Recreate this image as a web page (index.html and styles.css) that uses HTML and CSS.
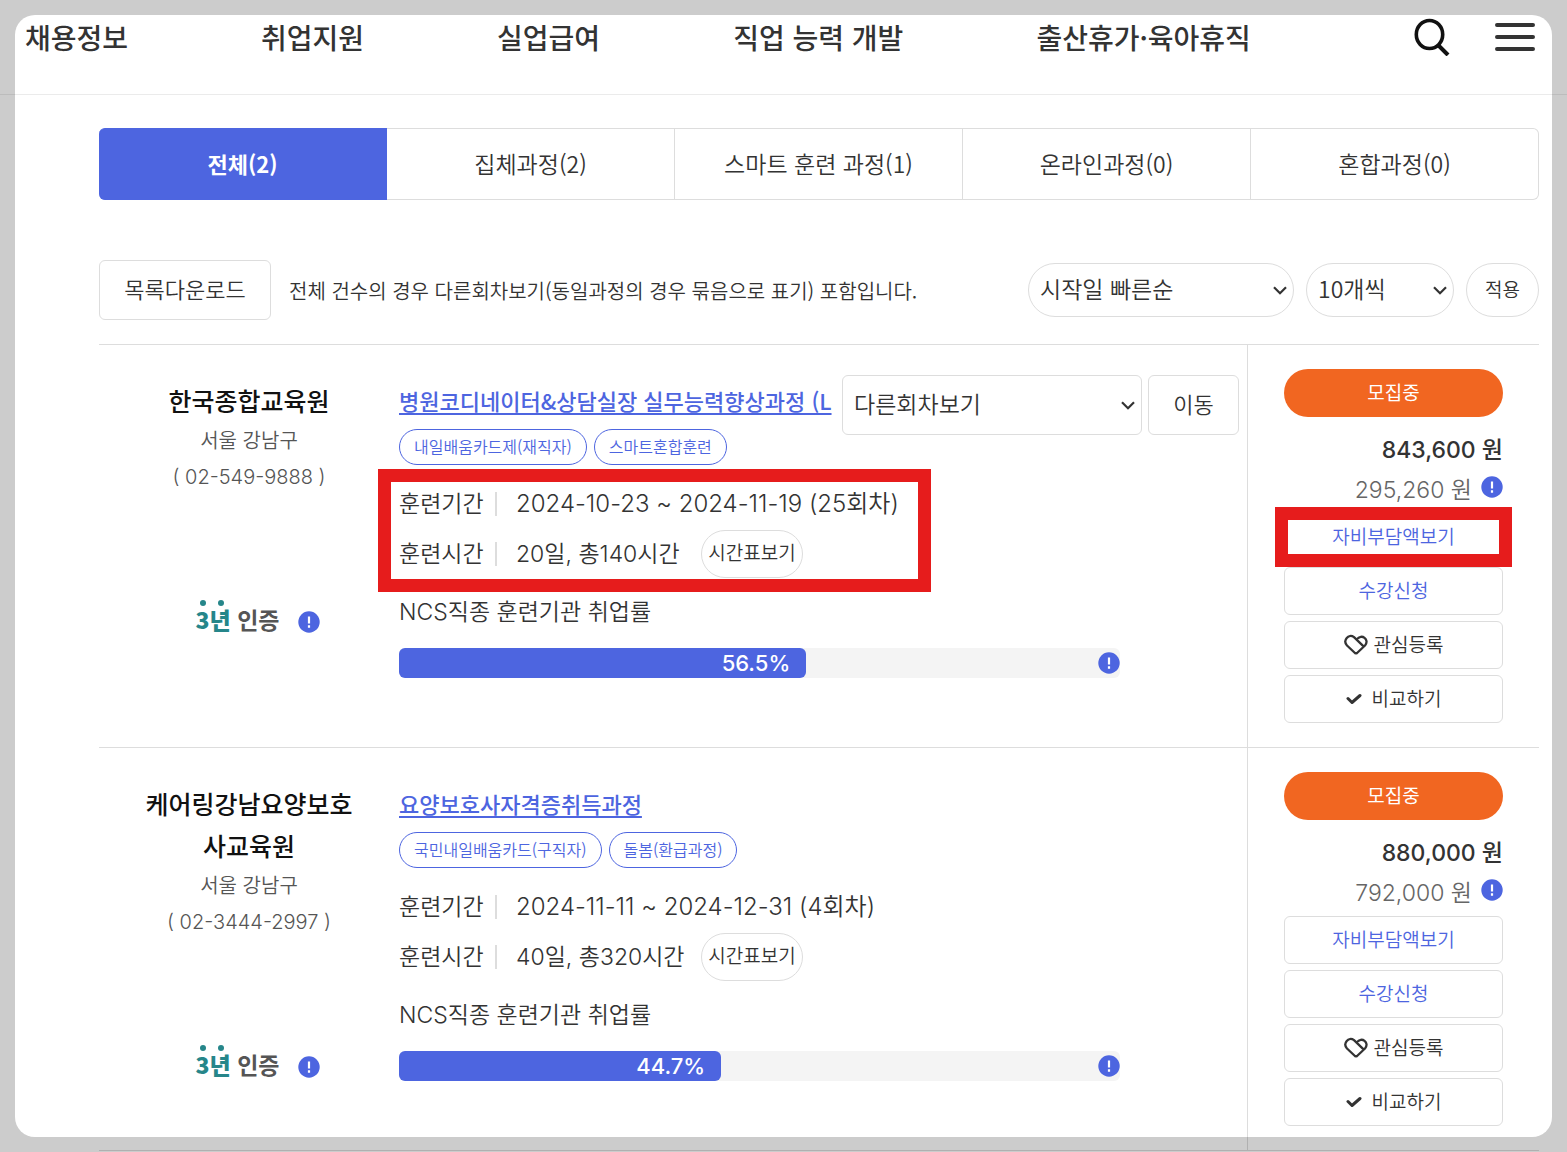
FILE: index.html
```html
<!DOCTYPE html>
<html lang="ko">
    <head>
        <meta charset="utf-8">
        <title>훈련과정 검색</title>
        <meta name="viewport" content="width=device-width, initial-scale=1">
        <link rel="stylesheet" href="styles.css">
    </head>

    <body>
        <svg class="sprite" aria-hidden="true">
            <symbol id="chevron" viewBox="0 0 14 9"><path d="M1 1.2 7 7.2 13 1.2" fill="none" stroke="currentColor" stroke-width="2.2"/></symbol>
            <symbol id="notice" viewBox="0 0 22 22"><circle cx="11" cy="11" r="10.7" fill="#4d65e0"/><path d="M11 5.5v7M11 14.3v2.4" stroke="#fff" stroke-width="2.2"/></symbol>
            <symbol id="heart" viewBox="0 0 24 22"><path d="M12 20 3 11.5C-1.5 6.5 4.5-1 10 3.2L19.3 12.2M12.8 5.4C17.5-1 26 5.5 21 11.5L12 20" fill="none" stroke="currentColor" stroke-width="2.3" stroke-linejoin="round"/></symbol>
            <symbol id="check" viewBox="0 0 16 12"><path d="M2 5.5 6 9.5 14 2.5" fill="none" stroke="currentColor" stroke-width="3" stroke-linecap="round" stroke-linejoin="round"/></symbol>
        </svg>

        <header class="header">
            <nav class="menu">
                <a href="#">채용정보</a>
                <a href="#">취업지원</a>
                <a href="#">실업급여</a>
                <a href="#">직업 능력 개발</a>
                <a href="#">출산휴가·육아휴직</a>
            </nav>
            <div class="header-tools">
                <button type="button" aria-label="검색">
                    <svg width="36" height="38" viewBox="0 0 36 38"><ellipse cx="15.5" cy="16.5" rx="13.2" ry="14" fill="none" stroke="#111" stroke-width="3.6"/><path d="M24 27 34 37" stroke="#111" stroke-width="4"/></svg>
                </button>
                <button type="button" aria-label="전체메뉴">
                    <svg width="40" height="30" viewBox="0 0 40 30"><path d="M2 3h36M2 15h36M2 27h36" stroke="#333" stroke-width="4" stroke-linecap="round"/></svg>
                </button>
            </div>
        </header>

        <main class="content">
            <div class="tabs">
                <button type="button" class="tab active">전체(2)</button>
                <button type="button" class="tab">집체과정(2)</button>
                <button type="button" class="tab">스마트 훈련 과정(1)</button>
                <button type="button" class="tab">온라인과정(0)</button>
                <button type="button" class="tab">혼합과정(0)</button>
            </div>

            <div class="toolbar">
                <button type="button" class="btn btn-download">목록다운로드</button>
                <p class="toolbar-note">전체 건수의 경우 다른회차보기(동일과정의 경우 묶음으로 표기) 포함입니다.</p>
                <span class="select select-round select-sort">
                    <select aria-label="정렬"><option>시작일 빠른순</option></select>
                    <svg><use href="#chevron"/></svg>
                </span>
                <span class="select select-round select-count">
                    <select aria-label="목록 개수"><option>10개씩</option></select>
                    <svg><use href="#chevron"/></svg>
                </span>
                <button type="button" class="btn btn-apply">적용</button>
            </div>

            <ul class="courses">
                <li class="course">
                    <div class="school">
                        <strong class="school-name">한국종합교육원</strong>
                        <span>서울 강남구</span>
                        <span>( 02-549-9888 )</span>
                        <div class="cert">
                            <span class="cert-mark"><b>3년</b> 인증</span>
                            <svg class="notice"><use href="#notice"/></svg>
                        </div>
                    </div>
                    <div class="info">
                        <div class="info-head">
                            <div class="info-title">
                                <a href="#" class="title">병원코디네이터&amp;상담실장 실무능력향상과정 (L</a>
                                <div class="tags"><span>내일배움카드제(재직자)</span><span>스마트혼합훈련</span></div>
                            </div>
                            <span class="select">
                                <select aria-label="다른회차보기"><option>다른회차보기</option></select>
                                <svg><use href="#chevron"/></svg>
                            </span>
                            <button type="button" class="btn btn-move">이동</button>
                        </div>
                        <dl class="schedule marked">
                            <div><dt>훈련기간</dt><dd>2024-10-23 ~ 2024-11-19 (25회차)</dd></div>
                            <div><dt>훈련시간</dt><dd class="hours">20일, 총140시간</dd><dd><button type="button" class="btn btn-timetable">시간표보기</button></dd></div>
                        </dl>
                        <p class="rate-label">NCS직종 훈련기관 취업률</p>
                        <div class="rate">
                            <div class="rate-bar" style="width: 56.5%">56.5%</div>
                            <svg class="notice"><use href="#notice"/></svg>
                        </div>
                    </div>
                    <div class="side">
                        <span class="status">모집중</span>
                        <p class="prices">
                            <strong>843,600 원</strong>
                            <span>295,260 원 <svg class="notice"><use href="#notice"/></svg></span>
                        </p>
                        <div class="marked"><button type="button" class="btn btn-blue">자비부담액보기</button></div>
                        <button type="button" class="btn btn-blue">수강신청</button>
                        <button type="button" class="btn"><svg class="icon-heart"><use href="#heart"/></svg>관심등록</button>
                        <button type="button" class="btn"><svg class="icon-check"><use href="#check"/></svg>비교하기</button>
                    </div>
                </li>

                <li class="course">
                    <div class="school">
                        <strong class="school-name">케어링강남요양보호사교육원</strong>
                        <span>서울 강남구</span>
                        <span>( 02-3444-2997 )</span>
                        <div class="cert">
                            <span class="cert-mark"><b>3년</b> 인증</span>
                            <svg class="notice"><use href="#notice"/></svg>
                        </div>
                    </div>
                    <div class="info">
                        <div class="info-head">
                            <div class="info-title">
                                <a href="#" class="title">요양보호사자격증취득과정</a>
                                <div class="tags"><span>국민내일배움카드(구직자)</span><span>돌봄(환급과정)</span></div>
                            </div>
                        </div>
                        <dl class="schedule">
                            <div><dt>훈련기간</dt><dd>2024-11-11 ~ 2024-12-31 (4회차)</dd></div>
                            <div><dt>훈련시간</dt><dd class="hours">40일, 총320시간</dd><dd><button type="button" class="btn btn-timetable">시간표보기</button></dd></div>
                        </dl>
                        <p class="rate-label">NCS직종 훈련기관 취업률</p>
                        <div class="rate">
                            <div class="rate-bar" style="width: 44.7%">44.7%</div>
                            <svg class="notice"><use href="#notice"/></svg>
                        </div>
                    </div>
                    <div class="side">
                        <span class="status">모집중</span>
                        <p class="prices">
                            <strong>880,000 원</strong>
                            <span>792,000 원 <svg class="notice"><use href="#notice"/></svg></span>
                        </p>
                        <button type="button" class="btn btn-blue">자비부담액보기</button>
                        <button type="button" class="btn btn-blue">수강신청</button>
                        <button type="button" class="btn"><svg class="icon-heart"><use href="#heart"/></svg>관심등록</button>
                        <button type="button" class="btn"><svg class="icon-check"><use href="#check"/></svg>비교하기</button>
                    </div>
                </li>
            </ul>
        </main>

        <div class="frame"></div>
    </body>
</html>
```
FILE: styles.css
```css
*,
*::before,
*::after {
    box-sizing: border-box;
    margin: 0;
    padding: 0;
}

body {
    background: #fff;
    color: #333;
    font-family: "Noto Sans CJK KR", sans-serif;
    font-size: 23px;
    font-weight: 350;
}

button,
select {
    font: inherit;
    color: inherit;
    background: #fff;
    cursor: pointer;
}

.sprite {
    display: none;
}

/* dimmed edge around the page */
.frame {
    position: fixed;
    inset: 15px;
    border-radius: 20px;
    box-shadow: 0 0 0 40px rgba(0, 0, 0, 0.2);
    pointer-events: none;
    z-index: 10;
}

.header {
    display: flex;
    align-items: center;
    justify-content: space-between;
    height: 95px;
    padding: 0 32px 20px 25px;
    border-bottom: 1px solid #ebebeb;
}

.menu {
    display: flex;
    gap: 133px;
}

.menu a {
    color: #333;
    font-size: 28px;
    font-weight: 500;
    line-height: 40px;
    text-decoration: none;
    white-space: nowrap;
}

.header-tools {
    display: flex;
    align-items: center;
    gap: 45px;
}

.header-tools button {
    border: 0;
}

.header-tools svg {
    display: block;
}

.content {
    padding: 33px 28px 0 99px;
}

.tabs {
    display: flex;
    height: 72px;
}

.tab {
    flex: 1;
    padding-bottom: 3px;
    border: 1px solid #ddd;
    border-left: 0;
}

.tab.active {
    background: #4d65e0;
    border-color: #4d65e0;
    border-radius: 6px 0 0 6px;
    color: #fff;
    font-size: 22px;
    font-weight: 700;
}

.tab:last-child {
    border-radius: 0 6px 6px 0;
}

.btn {
    height: 48px;
    padding-bottom: 3px;
    border: 1px solid #ddd;
    border-radius: 6px;
    font-size: 19px;
    white-space: nowrap;
}

.toolbar {
    display: flex;
    align-items: center;
    gap: 12px;
    margin-top: 60px;
}

.btn-download {
    width: 172px;
    height: 60px;
    padding-bottom: 5px;
    font-size: 22px;
}

.toolbar-note {
    flex: 1;
    padding-left: 6px;
    font-size: 20px;
    white-space: nowrap;
}

.select {
    position: relative;
    width: 300px;
    height: 60px;
}

.select select {
    appearance: none;
    width: 100%;
    height: 100%;
    padding: 0 36px 4px 11px;
    border: 1px solid #ddd;
    border-radius: 6px;
}

.select svg {
    position: absolute;
    top: 50%;
    right: 7px;
    width: 14px;
    height: 9px;
    margin-top: -4px;
    pointer-events: none;
}

.select-round {
    height: 54px;
}

.select-round select {
    border-radius: 27px;
}

.select-sort {
    width: 266px;
}

.select-count {
    width: 148px;
}

.btn-apply {
    width: 73px;
    height: 54px;
    border-radius: 27px;
}

.courses {
    margin-top: 24px;
    border-top: 1px solid #ddd;
    list-style: none;
}

.course {
    display: flex;
    border-bottom: 1px solid #ddd;
}

.notice {
    display: block;
    flex: none;
    width: 22px;
    height: 22px;
}

.school {
    display: flex;
    flex-direction: column;
    align-items: center;
    width: 300px;
    padding: 36px 40px 0;
    color: #555;
    font-family: Inter, "Noto Sans CJK KR", sans-serif;
    font-size: 20px;
    line-height: 36px;
    text-align: center;
}

.school-name {
    color: #111;
    font-size: 25px;
    font-weight: 500;
    line-height: 42px;
    word-break: break-all;
}

.cert {
    display: flex;
    align-items: center;
    gap: 19px;
    margin: 110px 0 0 18px;
}

.cert-mark {
    position: relative;
    padding-bottom: 5px;
    color: #555;
    font-family: "Noto Sans CJK KR", sans-serif;
    font-size: 23px;
    font-weight: 700;
    line-height: 28px;
}

.cert-mark b {
    color: #26868a;
}

/* two dots above the year */
.cert-mark::before {
    content: "";
    position: absolute;
    top: -5px;
    left: 4px;
    width: 6px;
    height: 6px;
    border-radius: 50%;
    background: #26868a;
    box-shadow: 18px 0 #26868a;
}

.info {
    flex: 1;
    min-width: 0;
    padding-top: 30px;
    font-family: Inter, "Noto Sans CJK KR", sans-serif;
}

.info-head {
    display: flex;
    gap: 6px;
    height: 90px;
    padding-right: 8px;
}

.info-head .select {
    flex: none;
    margin-left: -6px;
    font-family: "Noto Sans CJK KR", sans-serif;
}

.info-title {
    flex: 1;
    min-width: 0;
}

.title {
    display: block;
    color: #4d65e0;
    font-family: "Noto Sans CJK KR", sans-serif;
    font-size: 22px;
    font-weight: 500;
    line-height: 50px;
    text-decoration-thickness: 2px;
    text-underline-offset: 3px;
    white-space: nowrap;
}

.tags {
    display: flex;
    gap: 7px;
    margin-top: 4px;
}

.tags span {
    padding: 0 14px 2px;
    border: 1px solid #4d65e0;
    border-radius: 18px;
    color: #4d65e0;
    font-family: "Noto Sans CJK KR", sans-serif;
    font-size: 16px;
    line-height: 32px;
    white-space: nowrap;
}

.btn-move {
    width: 91px;
    height: 60px;
    padding-bottom: 5px;
    font-size: 22px;
}

.schedule {
    margin-top: 14px;
}

.schedule div {
    display: flex;
    align-items: center;
    height: 50px;
}

.schedule dt {
    width: 98px;
    border-right: 2px solid #ddd;
    line-height: 24px;
}

.schedule dd {
    padding-left: 19px;
    font-size: 24px;
    line-height: 24px;
}

.schedule .hours {
    width: 185px;
    font-size: 23px;
    white-space: nowrap;
}

.btn-timetable {
    display: block;
    width: 102px;
    padding-bottom: 0;
    border-radius: 24px;
}

.marked {
    position: relative;
}

.marked::after {
    content: "";
    position: absolute;
    inset: -6px -9px;
    border: 13px solid #e61c1c;
    pointer-events: none;
}

.schedule.marked::after {
    inset: -10px auto -13px -21px;
    width: 553px;
}

.rate-label {
    margin-top: 13px;
    line-height: 40px;
}

.rate {
    display: flex;
    align-items: center;
    justify-content: space-between;
    width: 85%;
    height: 30px;
    margin-top: 16px;
    border-radius: 6px;
    background: #f4f4f4;
}

.rate-bar {
    padding-right: 16px;
    border-radius: 6px;
    background: #4d65e0;
    color: #fff;
    font-size: 22px;
    font-weight: 500;
    line-height: 30px;
    text-align: right;
}

.side {
    display: flex;
    flex-direction: column;
    gap: 6px;
    width: 292px;
    padding: 24px 36px;
    border-left: 1px solid #ddd;
}

.side .btn {
    display: flex;
    align-items: center;
    justify-content: center;
    width: 100%;
}

.side .btn-blue {
    color: #4d65e0;
}

.status {
    padding-bottom: 2px;
    border-radius: 24px;
    background: #f16621;
    color: #fff;
    font-size: 19px;
    font-weight: 400;
    line-height: 46px;
    text-align: center;
}

.prices {
    display: flex;
    flex-direction: column;
    align-items: flex-end;
    height: 84px;
    padding-top: 7px;
    font-family: Inter, "Noto Sans CJK KR", sans-serif;
    line-height: 40px;
}

.prices strong {
    font-weight: 500;
}

.prices span {
    display: flex;
    gap: 9px;
    color: #666;
}

.prices .notice {
    margin-top: 6px;
}

.icon-heart {
    width: 24px;
    height: 22px;
    margin: 3px 6px 0 0;
}

.icon-check {
    width: 16px;
    height: 12px;
    margin: 3px 10px 0 0;
}
```
